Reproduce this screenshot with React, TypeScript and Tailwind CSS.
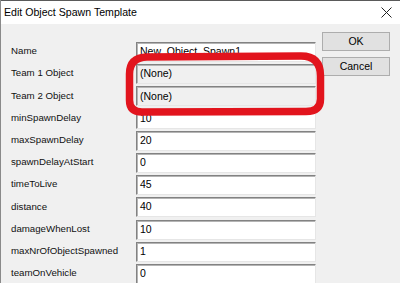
import React from "react";

const rows: { label: string; value: string; gray?: boolean }[] = [
  { label: "Name", value: "New_Object_Spawn1" },
  { label: "Team 1 Object", value: "(None)", gray: true },
  { label: "Team 2 Object", value: "(None)", gray: true },
  { label: "minSpawnDelay", value: "10" },
  { label: "maxSpawnDelay", value: "20" },
  { label: "spawnDelayAtStart", value: "0" },
  { label: "timeToLive", value: "45" },
  { label: "distance", value: "40" },
  { label: "damageWhenLost", value: "10" },
  { label: "maxNrOfObjectSpawned", value: "1" },
  { label: "teamOnVehicle", value: "0" },
];

export default function App() {
  return (
    <div
      className="relative w-[400px] h-[283px] overflow-hidden bg-[#f0f0f0] text-black border-l border-[#8a8a8a]"
      style={{ fontFamily: '"Liberation Sans", Arial, sans-serif' }}
    >
      <div className="h-[24px] bg-white border-t border-[#5a5a5a] flex items-center justify-between pl-[3px] pr-[8px]">
        <span className="text-[10.6px] leading-none">Edit Object Spawn Template</span>
        <svg width="11" height="11" viewBox="0 0 11 11">
          <path d="M0.5 0.5 L10.5 10.5 M10.5 0.5 L0.5 10.5" stroke="#222" strokeWidth="1" />
        </svg>
      </div>
      <div className="flex">
        <div className="flex flex-col pt-[18px]">
          {rows.map((r) => (
            <div key={r.label} className="h-[22.2px] flex">
              <div className="w-[135px] pl-[10px] h-[19px] flex items-center text-[9.7px] text-[#111]">
                {r.label}
              </div>
              <div
                className={`w-[180px] h-[20px] flex items-center pl-[3px] text-[10.5px] border border-t-[#828282] border-l-[#828282] border-r-[#e6e6e6] border-b-[#e6e6e6] shadow-[inset_1px_1px_0_#b4b4b4] ${
                  r.gray ? "bg-[#f0f0f0]" : "bg-white"
                }`}
              >
                {r.value}
              </div>
            </div>
          ))}
        </div>
        <div className="ml-[6px] pt-[8px] flex flex-col gap-[6px]">
          <div className="w-[68px] h-[19px] bg-[#e1e1e1] border border-[#adadad] flex items-center justify-center text-[10.5px]">
            OK
          </div>
          <div className="w-[68px] h-[19px] bg-[#e1e1e1] border border-[#adadad] flex items-center justify-center text-[10.5px]">
            Cancel
          </div>
        </div>
      </div>
      <svg className="absolute left-0 top-0 pointer-events-none" width="400" height="283">
        <path
          d="M128.5 74 Q128.5 57.5 146 57 L300 56 Q319.5 56 319.5 76 L319.5 99 Q319.5 111.5 305 111.5 L141 112 Q128.5 112 128.5 100 Z"
          fill="none"
          stroke="#e2141d"
          strokeWidth="7.5"
          strokeLinejoin="round"
        />
      </svg>
    </div>
  );
}
